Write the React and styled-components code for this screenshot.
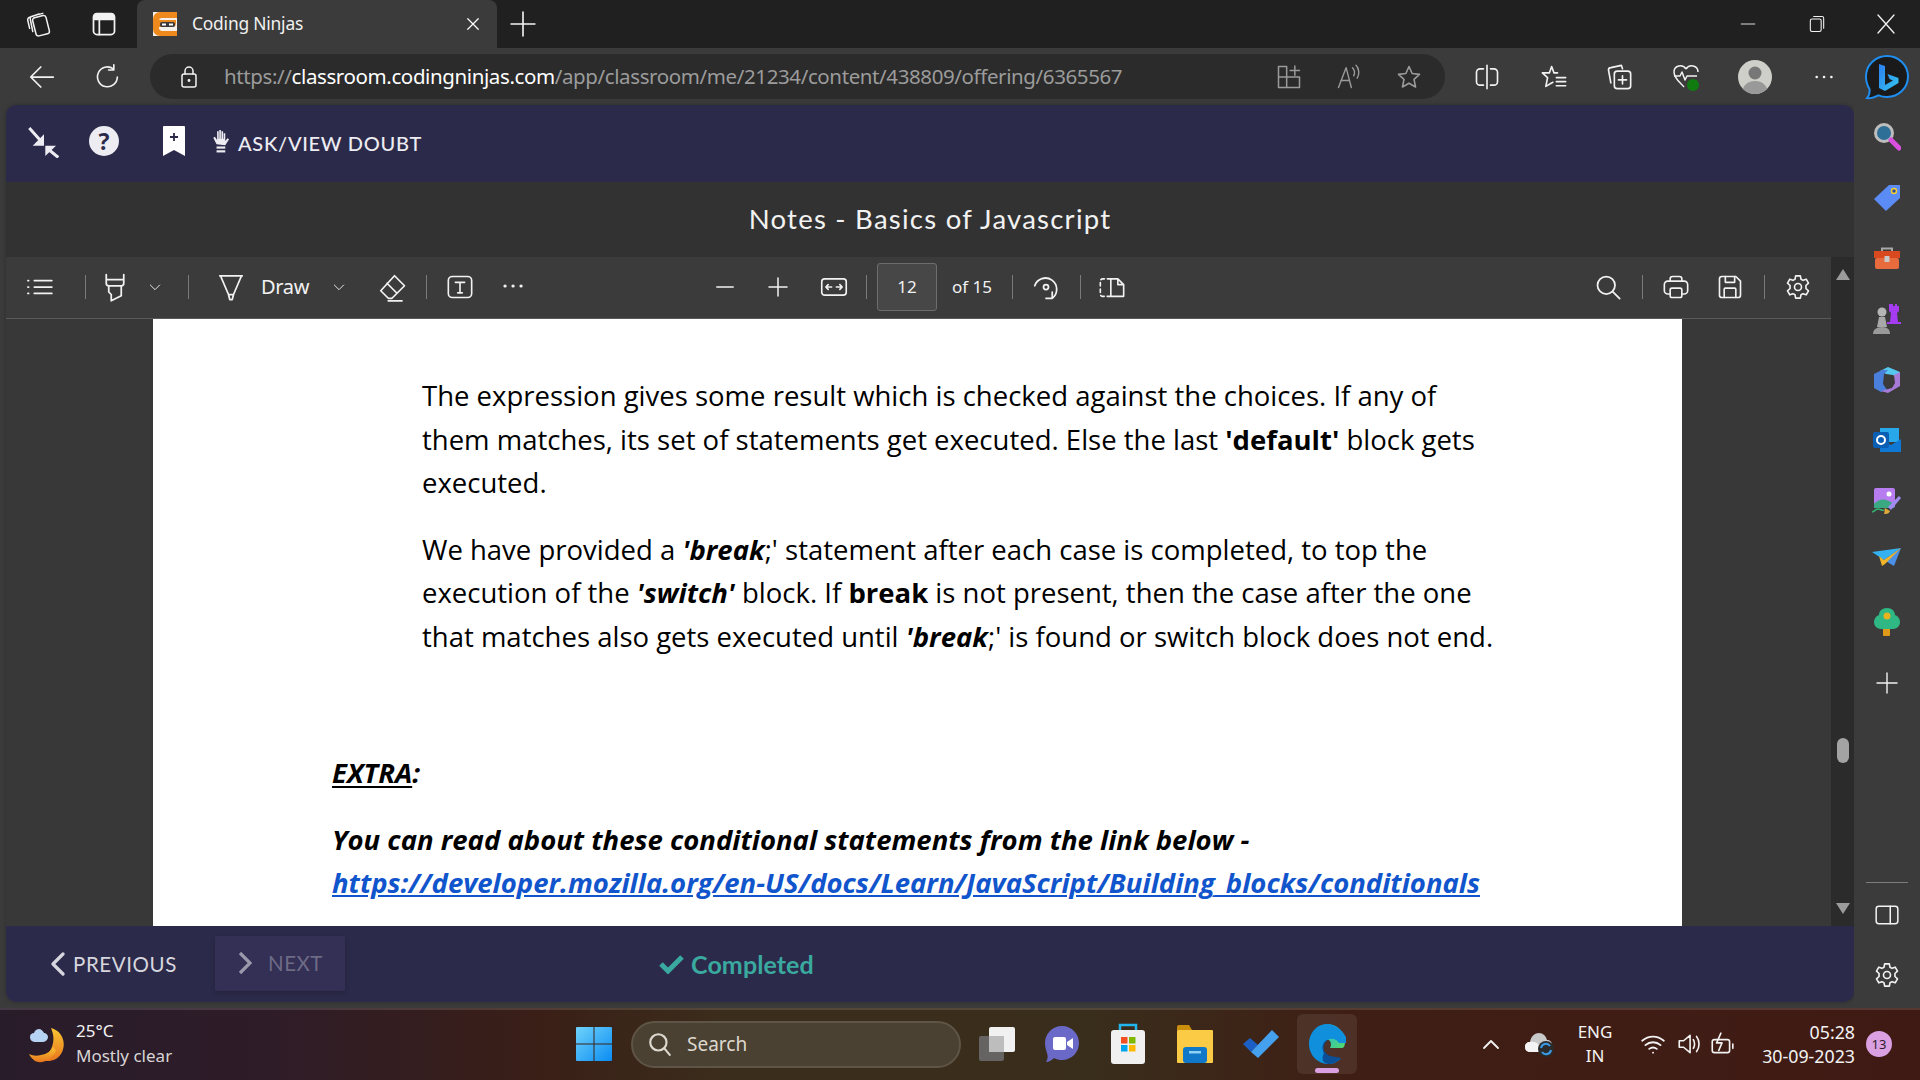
import React from 'react';
import styled, { createGlobalStyle } from 'styled-components';

const GlobalStyle = createGlobalStyle`
  html, body { margin: 0; padding: 0; background: #3b3b3b; }
  body { font-family: "Open Sans", "Liberation Sans", sans-serif; overflow: hidden; }
`;

const COLORS = {
  strip: '#202020',
  chrome: '#3b3b3b',
  purple: '#2c2a4a',
  title: '#323232',
  pdfBg: '#383838',
  track: '#2b2b2b',
  teal: '#3aa99f',
};

const UI = '"Noto Sans", "Open Sans", sans-serif';
const MULI = 'Lato, "Open Sans", sans-serif';

const Screen = styled.div`
  width: 1920px;
  height: 1080px;
  display: flex;
  flex-direction: column;
  overflow: hidden;
`;

/* title strip */
const TabStrip = styled.div`
  height: 48px;
  background: ${COLORS.strip};
  display: flex;
  align-items: stretch;
  flex: none;
  color: #fff;
`;

const Slot = styled.div`
  width: ${p => p.$w || 66}px;
  margin-left: ${p => p.$ml || 0}px;
  display: flex;
  align-items: center;
  justify-content: center;
  flex: none;
  color: ${p => p.$dim ? '#9a9a9a' : '#f2f2f2'};
`;

const Tab = styled.div`
  width: 360px;
  margin-left: 2px;
  background: ${COLORS.chrome};
  border-radius: 8px 8px 0 0;
  display: flex;
  align-items: center;
  padding-left: 16px;
  box-sizing: border-box;
  flex: none;
`;

const TabTitle = styled.span`
  font: 400 17.4px ${UI};
  color: #f0f0f0;
  margin: -2px 0 0 15px;
  width: 272px;
  letter-spacing: -0.2px;
`;

const WindowControls = styled.div`
  margin-left: auto;
  display: flex;
  align-items: stretch;
  padding-right: 0;
`;

/* browser toolbar */
const Toolbar = styled.div`
  height: 57px;
  background: ${COLORS.chrome};
  display: flex;
  align-items: center;
  padding-left: 9px;
  flex: none;
`;

const AddressBar = styled.div`
  width: 1295px;
  height: 45px;
  margin-left: 9px;
  border-radius: 23px;
  background: #2b2b2b;
  display: flex;
  align-items: center;
  flex: none;
`;

const Url = styled.div`
  font: 400 20.5px ${UI};
  color: #9b9b9b;
  margin: -2px 0 0 11px;
  width: 1035px;
  white-space: nowrap;
  letter-spacing: -0.39px;
  strong { color: #fff; font-weight: 400; }
`;

const Avatar = styled.div`
  width: 34px;
  height: 34px;
  border-radius: 50%;
  background: #cfcfca;
  overflow: hidden;
  display: flex;
`;

/* main */
const Main = styled.div`
  flex: 1;
  display: flex;
  min-height: 0;
`;

const AppFrame = styled.div`
  width: 1848px;
  margin: 0 0 6px 6px;
  border-radius: 10px;
  overflow: hidden;
  display: flex;
  flex-direction: column;
  flex: none;
  box-shadow: 0 0 4px rgba(0,0,0,0.25);
`;

const AppHeader = styled.div`
  height: 77px;
  flex: none;
  box-sizing: border-box;
  padding-bottom: 6px;
  background: ${COLORS.purple};
  display: flex;
  align-items: center;
`;

const HelpBadge = styled.div`
  width: 30px;
  height: 30px;
  border-radius: 50%;
  background: #ececf2;
  color: ${COLORS.purple};
  font: 700 23px/30px "Open Sans", sans-serif;
  text-align: center;
`;

const AskDoubt = styled.span`
  font: 500 20px ${MULI};
  color: #ececf2;
  letter-spacing: 0.7px;
  margin: 5px 0 0 6px;
`;

const DocTitle = styled.div`
  height: 75px;
  flex: none;
  background: ${COLORS.title};
  color: #f2f2f2;
  font: 400 27.5px ${MULI};
  letter-spacing: 1.25px;
  display: flex;
  align-items: center;
  justify-content: center;
  padding-bottom: 2px;
  box-sizing: border-box;
`;

const ViewerRow = styled.div`
  flex: 1;
  display: flex;
  min-height: 0;
`;

const Viewer = styled.div`
  flex: 1;
  display: flex;
  flex-direction: column;
  min-width: 0;
`;

const PdfTools = styled.div`
  height: 62px;
  flex: none;
  background: ${COLORS.chrome};
  border-bottom: 1px solid #5a5a5a;
  box-sizing: border-box;
  padding-bottom: 2px;
  display: flex;
  align-items: center;
  color: #f2f2f2;
`;

const Sep = styled.div`
  width: 1px;
  height: 24px;
  background: #7a7a7a;
  flex: none;
  margin-left: ${p => p.$ml || 0}px;
`;

const DrawLabel = styled.span`
  font: 400 20px ${UI};
  margin-left: 8px;
  width: 49px;
  letter-spacing: -0.3px;
  flex: none;
`;

const PageInput = styled.div`
  width: 60px;
  height: 48px;
  margin-left: 10px;
  box-sizing: border-box;
  border: 1px solid #6d6d6d;
  border-radius: 3px;
  background: #474747;
  font: 400 17px ${UI};
  display: flex;
  align-items: center;
  justify-content: center;
  flex: none;
`;

const PageCount = styled.span`
  font: 400 17px ${UI};
  margin-left: 15px;
  width: 41px;
  white-space: nowrap;
  flex: none;
`;

const RightTools = styled.div`
  margin-left: auto;
  display: flex;
  align-items: center;
  padding-right: 13px;
`;

const PdfArea = styled.div`
  flex: 1;
  background: ${COLORS.pdfBg};
  padding-left: 147px;
  min-height: 0;
`;

const Page = styled.div`
  width: 1529px;
  height: 100%;
  background: #fff;
  color: #000;
  box-sizing: border-box;
  padding: 55px 0 0 179px;
  overflow: hidden;
  font: 400 27.5px/43.5px "Open Sans", sans-serif;
  white-space: nowrap;
`;

const Para = styled.p`
  margin: 0 0 23px 90px;
`;

const Extra = styled.p`
  margin: 93px 0 23px;
  font-weight: 700;
  font-style: italic;
  u { text-underline-offset: 3px; }
`;

const ExtraLink = styled.p`
  margin: 0;
  font-weight: 700;
  font-style: italic;
  line-height: 43px;
  a { color: #1155cc; }
`;

const Scrollbar = styled.div`
  width: 23px;
  flex: none;
  background: ${COLORS.track};
  position: relative;
`;

const Arrow = styled.div`
  position: absolute;
  left: 5px;
  width: 0;
  height: 0;
  border-left: 7px solid transparent;
  border-right: 7px solid transparent;
  ${p => p.$up
    ? 'top: 12px; border-bottom: 11px solid #9b9b9b;'
    : 'bottom: 12px; border-top: 11px solid #9b9b9b;'}
`;

const Thumb = styled.div`
  position: absolute;
  left: 6px;
  top: 481px;
  width: 12px;
  height: 25px;
  border-radius: 6px;
  background: #a3a3a3;
`;

const BottomNav = styled.div`
  height: 76px;
  flex: none;
  background: ${COLORS.purple};
  display: flex;
  align-items: center;
  font-family: ${MULI};
`;

const PrevBtn = styled.div`
  display: flex;
  align-items: center;
  margin-left: 44px;
  color: #d6d6de;
  font-size: 20.5px;
  letter-spacing: 0.6px;
  width: 165px;
  gap: 7px;
  flex: none;
`;

const NextBtn = styled.div`
  width: 130px;
  height: 55px;
  background: #332f55;
  box-shadow: 0 2px 5px rgba(0,0,0,0.2);
  display: flex;
  align-items: center;
  padding-left: 22px;
  box-sizing: border-box;
  gap: 14px;
  color: #6e6b85;
  font-size: 20.5px;
  letter-spacing: 0.5px;
  margin-bottom: 2px;
  flex: none;
`;

const Completed = styled.div`
  margin-left: 314px;
  display: flex;
  align-items: center;
  gap: 7px;
  color: ${COLORS.teal};
  font-size: 25px;
  font-weight: 700;
  letter-spacing: 0.1px;
`;

/* edge sidebar */
const Sidebar = styled.div`
  flex: 1;
  display: flex;
  flex-direction: column;
  align-items: center;
  padding: 2px 0 3px;
  background: ${COLORS.chrome};
`;

const SideSlot = styled.div`
  height: ${p => p.$h || 60.6}px;
  display: flex;
  align-items: center;
  justify-content: center;
  flex: none;
  color: #f2f2f2;
`;

const SideBottom = styled.div`
  margin-top: auto;
  display: flex;
  flex-direction: column;
  align-items: center;
`;

const SideRule = styled.div`
  width: 42px;
  height: 1px;
  background: #7d7d7d;
  margin-bottom: 2px;
`;

/* taskbar */
const Taskbar = styled.div`
  height: 72px;
  flex: none;
  box-sizing: border-box;
  border-top: 2px solid rgba(255,255,255,0.13);
  padding-bottom: 2px;
  background: linear-gradient(90deg, #291c2a 0%, #2e1c28 14%, #3a1f17 28%, #3b2d1c 38%, #392d1c 57%, #3f1f15 70%, #3f1a14 100%);
  display: flex;
  align-items: center;
  color: #f2f2f2;
`;

const Weather = styled.div`
  display: flex;
  align-items: center;
  margin-left: 29px;
  width: 547px;
  flex: none;
  gap: 11px;
`;

const WeatherText = styled.div`
  font: 400 17px/24.5px ${UI};
  margin-top: -1px;
  span { display: block; color: #d8d4d4; }
`;

const SearchBox = styled.div`
  width: 330px;
  height: 47px;
  margin-left: 19px;
  box-sizing: border-box;
  border: 2px solid #5f5546;
  border-radius: 24px;
  background: #4b4132;
  display: flex;
  align-items: center;
  padding-left: 14px;
  gap: 14px;
  font: 400 19px ${UI};
  color: #ddd8cf;
  flex: none;
`;

const TaskSlot = styled.div`
  width: ${p => p.$w || 60}px;
  height: 60px;
  margin-left: ${p => p.$ml || 0}px;
  display: flex;
  align-items: center;
  justify-content: center;
  flex: none;
  position: relative;
  border-radius: 6px;
  ${p => p.$active && 'background: rgba(255,255,255,0.08);'}
`;

const ActiveMark = styled.div`
  position: absolute;
  bottom: 1px;
  left: 18px;
  width: 24px;
  height: 5px;
  border-radius: 3px;
  background: #dba0e2;
`;

const LangBox = styled.div`
  width: 50px;
  margin-left: 10px;
  font: 400 17px/24px ${UI};
  text-align: center;
  flex: none;
`;

const Clock = styled.div`
  width: 110px;
  margin-left: 8px;
  font: 400 17.8px/24.5px ${UI};
  text-align: right;
  flex: none;
`;

const Badge = styled.div`
  width: 26px;
  height: 26px;
  margin-left: 11px;
  border-radius: 50%;
  background: #dba0e2;
  color: #2a1c2a;
  font: 400 13px ${UI};
  display: flex;
  align-items: center;
  justify-content: center;
  flex: none;
`;

/* icons */
const Ic = ({ s = 24, w, h, sw = 1.5, vb = '0 0 24 24', children }) => (
  <svg width={w || s} height={h || s} viewBox={vb} fill="none" stroke="currentColor" strokeWidth={sw} strokeLinecap="round" strokeLinejoin="round">
    {children}
  </svg>
);

const Gear = ({ s = 28 }) => (
  <Ic s={s} sw={1.4}>
    <circle cx="12" cy="12" r="3" />
    <path d="M10 2.500h4l.6 2.900 1.700.9 2.700-1 2 3.400-2.200 2v2.600l2.200 2-2 3.400-2.700-1-1.700.9-.6 2.900h-4l-.6-2.900-1.700-.9-2.700 1-2-3.400 2.200-2v-2.600l-2.200-2 2-3.400 2.700 1 1.700-.9z" />
  </Ic>
);

const Favicon = () => (
  <svg width="24" height="24" viewBox="0 0 24 24">
    <rect width="24" height="24" fill="#f5f1ea" />
    <path d="M7 0h17v6H9a3 3 0 0 0-3 3v7c0 1.600 1.400 3 3 3h15v5H7a7 7 0 0 1-7-7V7a7 7 0 0 1 7-7z" fill="#ee8a1d" />
    <path d="M6 8h17v3a4 4 0 0 1-4 4H6z" fill="#ee8a1d" />
    <rect x="7" y="10" width="15" height="5" rx="2" fill="#3a3a3a" />
    <rect x="9" y="11.500" width="4" height="2" fill="#fff" />
    <rect x="16" y="11.500" width="4" height="2" fill="#fff" />
  </svg>
);

const BingLogo = () => (
  <svg width="46" height="46" viewBox="0 0 46 46">
    <defs>
      <linearGradient id="bingB" x1="0" y1="0" x2="1" y2="1">
        <stop offset="0" stopColor="#2b7ff0" />
        <stop offset="1" stopColor="#35c6ee" />
      </linearGradient>
    </defs>
    <path d="M23 2c11.600 0 21 9 21 20.500S34.600 43 23 43c-3 0-6-.6-8.500-1.700C11 43 6 44.500 3 44c2-2.500 3-6 2.500-9C3.300 31.500 2 27 2 22.500 2 11 11.400 2 23 2z" fill="#1a1a1a" stroke="#1e8ef0" strokeWidth="2" />
    <path d="M15 10l6 2v19l8-4.500-3.500-1.500-2-5 11 4v5L21 37l-6-3z" fill="url(#bingB)" />
  </svg>
);

const SearchGlass = () => (
  <svg width="28" height="30" viewBox="0 0 28 30">
    <circle cx="11" cy="11" r="8.500" fill="#2d6f96" stroke="#bdbdbd" strokeWidth="3" />
    <path d="M18 18l8 8" stroke="#d94fe0" strokeWidth="5" strokeLinecap="round" />
  </svg>
);

const TagIcon = () => (
  <svg width="28" height="28" viewBox="0 0 28 28">
    <path d="M16 1h11v13L13 27 1 15z" fill="#5b8bf5" strokeLinejoin="round" />
    <circle cx="21" cy="7" r="2.500" fill="#2c4fa0" stroke="#f5cf2e" strokeWidth="1.500" />
  </svg>
);

const Toolbox = () => (
  <svg width="28" height="24" viewBox="0 0 28 24">
    <path d="M9 6V2.500h10V6" fill="none" stroke="#a8a8a8" strokeWidth="2" />
    <rect x="1" y="5" width="26" height="7" fill="#d8491f" />
    <rect x="2" y="12" width="24" height="11" rx="2" fill="#e86b3e" />
    <rect x="11.500" y="10" width="5" height="6" fill="#c9c9c9" />
  </svg>
);

const Chess = () => (
  <svg width="30" height="32" viewBox="0 0 30 32">
    <path d="M21 1h2v2h2V1h2v2h2v5l-2 2 1 9h3v2H17v-2h3l1-9-2-2V1h2z" fill="#a53cf2" transform="translate(-2 0)" />
    <circle cx="10" cy="9" r="4.500" fill="#b5b5b5" />
    <path d="M7 14h6l2 10H5z" fill="#a8a8a8" />
    <path d="M1 31c0-4 3-7 9-7s8 3 8 7z" fill="#999" />
  </svg>
);

const OfficeLogo = () => (
  <svg width="27" height="26" viewBox="0 0 27 26">
    <path d="M6 4l8-4 12 5v8l-7-5-7-1z" fill="#56c8ee" />
    <path d="M0 7l8-4 6 0-4 4-1 10 4 6-6 2-7-4z" fill="#4a7fdc" />
    <path d="M26 5v14l-12 7-7-2 11-3 3-5-1-8z" fill="#a77ad8" />
  </svg>
);

const Outlook = () => (
  <svg width="28" height="26" viewBox="0 0 28 26">
    <rect x="7" y="1" width="19" height="14" fill="#28a8ea" />
    <path d="M7 12l11 6 10-6v13H7z" fill="#0f78d4" />
    <rect x="0" y="5" width="16" height="16" rx="2" fill="#0a5fb4" />
    <circle cx="8" cy="13" r="4" fill="none" stroke="#fff" strokeWidth="2" />
  </svg>
);

const Designer = () => (
  <svg width="30" height="28" viewBox="0 0 30 28">
    <rect x="2" y="1" width="21" height="20" rx="2" fill="#b77df0" />
    <circle cx="17" cy="7" r="2.500" fill="#fff" />
    <path d="M2 17c5-6 12-6 20 0v4H2z" fill="#3aa882" />
    <path d="M0 25c4-1 3-3 6-3s3 2 6 1" stroke="#35b36f" strokeWidth="1.500" fill="none" />
    <path d="M16 20l11-11 2 2-10 12z" fill="#a28bf2" />
    <path d="M13 21l5 3c-1 3-4 3-6 3 1-2 0-4 1-6z" fill="#e0a83a" />
  </svg>
);

const PaperPlane = () => (
  <svg width="30" height="26" viewBox="0 0 30 26">
    <path d="M0 4L29 0 12 12z" fill="#35b1ef" />
    <path d="M29 0L22 18 12 12z" fill="#4b8fe6" />
    <path d="M7 8l5 4 17-12-16 16-3 2z" fill="#f0b429" />
  </svg>
);

const TreeIcon = () => (
  <svg width="26" height="28" viewBox="0 0 26 28">
    <rect x="9" y="19" width="7" height="9" rx="1" fill="#e09a1a" />
    <path d="M13 0c6 0 8 4 8 7 3 1 5 4 5 7 0 4-3 7-7 7H7c-4 0-7-3-7-7 0-3 2-6 5-7 0-3 2-7 8-7z" fill="#2fb784" />
    <circle cx="13" cy="8" r="3.500" fill="#e8b31f" />
  </svg>
);

const Windows = () => (
  <svg width="36" height="36" viewBox="0 0 36 36">
    <defs>
      <linearGradient id="win" x1="0" y1="0" x2="1" y2="1">
        <stop offset="0" stopColor="#6fd3fb" />
        <stop offset="1" stopColor="#0b8cf2" />
      </linearGradient>
    </defs>
    <path d="M1 1h16.500v16.500H0V2a1 1 0 0 1 1-1zM18.500 1H35a1 1 0 0 1 1 1v15.500H18.500zM0 18.500h17.500V35H1a1 1 0 0 1-1-1zM18.500 18.500H36V34a1 1 0 0 1-1 1H18.500z" fill="url(#win)" />
  </svg>
);

const WeatherIcon = () => (
  <svg width="36" height="38" viewBox="0 0 36 38">
    <defs>
      <linearGradient id="moon" x1="0" y1="0" x2="0" y2="1">
        <stop offset="0" stopColor="#f7c531" />
        <stop offset="1" stopColor="#e8761e" />
      </linearGradient>
    </defs>
    <path d="M22 3c12 3 16 16 10 26-5 8-17 10-26 2 10 2 16-3 18-13 1-6 0-10-2-15z" fill="url(#moon)" />
    <path d="M6 36c-3-2-5-5-6-7 4 2 8 2 12 1 6-1 10-4 12-8l3 4c-3 6-8 10-14 11-3 .5-5 0-7-1z" fill="url(#moon)" />
    <path d="M7 17c-4 0-6-2-6-5s2-4 4-4c1-3 3-4 5-4s4 2 5 4c2 0 4 2 4 4s-2 5-5 5z" fill="#b7d3f4" />
  </svg>
);

const TaskView = () => (
  <svg width="38" height="36" viewBox="0 0 38 36">
    <rect x="11" y="1" width="26" height="25" rx="2" fill="#f1f1f1" />
    <rect x="1" y="10" width="25" height="25" rx="2" fill="#6a6a6a" fillOpacity="0.9" />
    <rect x="11" y="10" width="15" height="16" fill="#bdbdbd" />
  </svg>
);

const MeetIcon = () => (
  <svg width="36" height="38" viewBox="0 0 36 38">
    <path d="M18 1c10 0 17 8 17 17s-7 17-17 17c-3 0-5-.5-8-2-2 2-5 4-8 4 2-3 2-6 1-9-1-3-2-6-2-10C1 9 8 1 18 1z" fill="#6b69c8" />
    <rect x="9" y="12" width="13" height="13" rx="2" fill="#fff" />
    <path d="M23 17l6-4v11l-6-4z" fill="#fff" />
  </svg>
);

const StoreIcon = () => (
  <svg width="36" height="42" viewBox="0 0 36 42">
    <path d="M10 8V2h16v6" fill="none" stroke="#22b6ec" strokeWidth="2.500" />
    <rect x="1" y="7" width="34" height="34" rx="3" fill="#f0f0f0" />
    <rect x="11" y="14" width="6.500" height="6.500" fill="#f25022" />
    <rect x="19" y="14" width="6.500" height="6.500" fill="#7fba00" />
    <rect x="11" y="22" width="6.500" height="6.500" fill="#00a4ef" />
    <rect x="19" y="22" width="6.500" height="6.500" fill="#ffb900" />
  </svg>
);

const FolderIcon = () => (
  <svg width="36" height="38" viewBox="0 0 36 38">
    <path d="M0 2a2 2 0 0 1 2-2h10l3 5h-15z" fill="#c98e0c" />
    <rect x="0" y="5" width="36" height="33" rx="1" fill="#fbcb45" />
    <rect x="6" y="22" width="24" height="16" rx="3" fill="#0f78c9" />
    <rect x="12" y="26" width="12" height="2.500" fill="#8fd0f5" />
  </svg>
);

const TodoIcon = () => (
  <svg width="38" height="30" viewBox="0 0 38 30">
    <path d="M1 15l7-6 8 7-7 7z" fill="#1c5fc4" />
    <path d="M9 23L30 1l7 7-21 21z" fill="#45a0ee" />
  </svg>
);

const EdgeIcon = () => (
  <svg width="38" height="42" viewBox="0 0 38 42">
    <defs>
      <linearGradient id="edgeA" x1="0" y1="0" x2="1" y2="1">
        <stop offset="0" stopColor="#1fb8e0" />
        <stop offset="1" stopColor="#54d96c" />
      </linearGradient>
    </defs>
    <path d="M19 1c11 0 18 9 18 18 0 3-1 6-3 6H22c3-5-1-10-6-9z" fill="url(#edgeA)" />
    <path d="M19 1C8 1 1 11 1 21c0 11 9 20 19 20 5 0 10-2 13-6-6 3-14 1-17-5-3-6 0-13 6-14 4-1 7 1 9 4h9C38 10 29 1 19 1z" fill="#0f8fdc" />
    <path d="M16 30c-3-6-1-12 4-13-6 4-6 13 2 16 4 1 8 1 11 2-3 4-8 6-13 6-5-1-7-5-4-11z" fill="#0b4f97" />
  </svg>
);

const OneDrive = () => (
  <svg width="30" height="28" viewBox="0 0 30 28">
    <path d="M6 22c-4 0-6-2-6-5s2-5 5-5c1-6 5-9 9-9 4 0 7 3 8 7 3 0 5 2 5 5" fill="#c9c9c9" />
    <path d="M0 17c0-3 2-5 5-5 3-1 7 0 9 3v7H6c-4 0-6-2-6-5z" fill="#f4f4f4" />
    <circle cx="21" cy="19" r="8" fill="#2b2b2b" />
    <path d="M16 18a5 5 0 0 1 9-2M26 20a5 5 0 0 1-9 2" stroke="#3a9be8" strokeWidth="2" fill="none" />
  </svg>
);

function App() {
  return (
    <Screen>
      <GlobalStyle />
      <TabStrip>
        <Slot $w={68} $ml={5}>
          <Ic s={30} sw={1.2}>
            <rect x="8" y="6" width="11" height="15" rx="2" transform="rotate(-14 13 13)" />
            <path d="M7 18L5 8a2 2 0 0 1 1.500-2.300L15 3.500M4.500 15.500L3 9a2 2 0 0 1 1.500-2.400L12 4" />
          </Ic>
        </Slot>
        <Slot $w={62}>
          <Ic s={28} sw={1.5}><rect x="3" y="3" width="18" height="18" rx="3" /><path d="M8 8v13" /><path d="M4 4h16v4H4z" fill="currentColor" /></Ic>
        </Slot>
        <Tab>
          <Favicon />
          <TabTitle>Coding Ninjas</TabTitle>
          <Ic s={18} sw={1.6}><path d="M5 5l14 14M19 5L5 19" /></Ic>
        </Tab>
        <Slot $w={52}>
          <Ic s={26} sw={1.5}><path d="M12 1v22M1 12h22" /></Ic>
        </Slot>
        <WindowControls>
          <Slot $w={69}><Ic s={18} sw={1.2}><path d="M3 12h18" /></Ic></Slot>
          <Slot $w={69}><Ic s={20} sw={1.3}><rect x="4" y="6" width="13" height="15" rx="2" /><path d="M8 3h10a2 2 0 0 1 2 2v12" /></Ic></Slot>
          <Slot $w={69}><Ic s={24} sw={1.3}><path d="M4 3l16 18M20 3L4 21" /></Ic></Slot>
        </WindowControls>
      </TabStrip>

      <Toolbar>
        <Slot><Ic s={30} sw={1.4}><path d="M21 12H3.500M11 4l-8 8 8 8" /></Ic></Slot>
        <Slot><Ic s={28} sw={1.4}><path d="M20 12a8.500 8.500 0 1 1-3.500-7M17 1.500V6h-4.500" /></Ic></Slot>
        <AddressBar>
          <Slot $w={48} $ml={15}>
            <Ic s={24} sw={1.5}><rect x="5" y="9" width="14" height="13" rx="2" /><path d="M8 9V6a4 4 0 0 1 8 0v3" /><circle cx="12" cy="15.500" r="0.700" fill="currentColor" /></Ic>
          </Slot>
          <Url>https://<strong>classroom.codingninjas.com</strong>/app/classroom/me/21234/content/438809/offering/6365567</Url>
          <Slot $w={60} $dim><Ic s={28} sw={1.3}><path d="M3 3h7v18H3zM3 12h18v9H10M13 6.500h8M17 2.500v8" /></Ic></Slot>
          <Slot $w={60} $dim><Ic s={28} sw={1.2}><path d="M3 21L9.500 4 14 21M5 15h7.500M15 4c2 2 2 5 1 7M18 2c3 3 3 8 1 11" /></Ic></Slot>
          <Slot $w={60} $dim><Ic s={28} sw={1.4}><path d="M12 3l2.700 6 6.300.7-4.700 4.300 1.300 6.500L12 17.300 6.400 20.500l1.300-6.500L3 9.700 9.300 9z" /></Ic></Slot>
        </AddressBar>
        <Slot $w={68} $ml={8}>
          <Ic s={28} sw={1.4}><path d="M9 5H6a3 3 0 0 0-3 3v8a3 3 0 0 0 3 3h3M15 5h3a3 3 0 0 1 3 3v8a3 3 0 0 1-3 3h-3M12 2v20" /></Ic>
        </Slot>
        <Slot $w={65}>
          <Ic s={28} sw={1.4}><path d="M15 8.500h-3L10 3 8 8.500H2l4.500 4L5 20l6-3.500M14 12.500h8M14 16h8M14 19.500h8" /></Ic>
        </Slot>
        <Slot $w={66}>
          <Ic s={28} sw={1.4}><rect x="8" y="7" width="14" height="15" rx="2.500" /><path d="M15 11v7M11.500 14.500h7M5 17L3 6a2 2 0 0 1 2-2l9-2 1 3" /></Ic>
        </Slot>
        <Slot $w={67}>
          <svg width="30" height="30" viewBox="0 0 30 30" fill="none" stroke="#f2f2f2" strokeWidth="1.500" strokeLinejoin="round">
            <path d="M15 7c-3-5-12-4-12 3 0 7 8 12 10 15" />
            <path d="M15 7c3-5 12-4 12 3" />
            <path d="M3 14h6l2-4 3 8 2-4h10" />
            <circle cx="22" cy="23" r="6" fill="#107c10" stroke="none" />
          </svg>
        </Slot>
        <Slot $w={71}>
          <Avatar>
            <svg width="34" height="34" viewBox="0 0 34 34">
              <circle cx="17" cy="13" r="6.500" fill="#777" />
              <path d="M4 34c0-9 6-13 13-13s13 4 13 13z" fill="#999" />
            </svg>
          </Avatar>
        </Slot>
        <Slot $w={68}>
          <Ic s={22} sw={2.800}><path d="M4 12h.1M12 12h.1M20 12h.1" /></Ic>
        </Slot>
        <Slot $w={58}><BingLogo /></Slot>
      </Toolbar>

      <Main>
        <AppFrame>
          <AppHeader>
            <Slot $w={56} $ml={10}>
              <svg width="34" height="34" viewBox="0 0 34 34" fill="#ececf2" stroke="#ececf2" strokeWidth="3">
                <path d="M2.300 4L13 16M21 25l10.300 8.500" fill="none" />
                <path d="M17 10.300v11.400H5.700z" strokeWidth="0" />
                <path d="M18.300 21.700V32L29 21.700z" strokeWidth="0" />
              </svg>
            </Slot>
            <Slot $w={64}><HelpBadge>?</HelpBadge></Slot>
            <Slot $w={76}>
              <svg width="22" height="30" viewBox="0 0 22 30">
                <path d="M1 0h20a1 1 0 0 1 1 1v29l-11-6-11 6V1a1 1 0 0 1 1-1z" fill="#fff" />
                <path d="M11 7v8M7 11h8" stroke="#2c2a4a" strokeWidth="1.800" />
              </svg>
            </Slot>
            <svg width="20" height="24" viewBox="0 0 18 22" fill="#ececf2">
              <path d="M4 14L1 8l1.500-1 2 3V2h1.500v7h.5V1h1.500v8h.5V2H10v7h.5V4H12v7l2-2.500 1.500 1L12 15z" />
              <rect x="4" y="16" width="8" height="2" />
              <rect x="4" y="19.500" width="8" height="2" />
            </svg>
            <AskDoubt>ASK/VIEW DOUBT</AskDoubt>
          </AppHeader>

          <DocTitle>Notes - Basics of Javascript</DocTitle>

          <ViewerRow>
            <Viewer>
              <PdfTools>
                <Slot $w={66}>
                  <Ic s={28} sw={1.5}><path d="M8 6.500h15M8 12h15M8 17.500h15M2.500 6.500h.6M2.500 12h.6M2.500 17.500h.6" /></Ic>
                </Slot>
                <Sep $ml={13} />
                <Slot $w={58}>
                  <Ic s={30} sw={1.4}><path d="M5 2v7a2 2 0 0 0 2 2h10a2 2 0 0 0 2-2V2M5 6h14M7 11v5l2 2v5l8-4v-8" /></Ic>
                </Slot>
                <Slot $w={22}><Ic s={16} sw={1.400}><path d="M5 9l7 7 7-7" /></Ic></Slot>
                <Sep $ml={22} />
                <Slot $w={44} $ml={20}>
                  <Ic s={30} sw={1.4}><path d="M3 3h18M4 4l6 14h4l6-14M10 18l1 4h2l1-4" /></Ic>
                </Slot>
                <DrawLabel>Draw</DrawLabel>
                <Slot $w={22} $ml={18}><Ic s={16} sw={1.400}><path d="M5 9l7 7 7-7" /></Ic></Slot>
                <Slot $w={40} $ml={22}>
                  <Ic s={30} sw={1.400}><path d="M14 3l8 8-10 10H9l-6-6zM8 9l8 8M9 23h11" /></Ic>
                </Slot>
                <Sep $ml={14} />
                <Slot $w={40} $ml={13}>
                  <Ic s={28} sw={1.400}><rect x="2" y="3" width="20" height="18" rx="3.500" /><path d="M8 8h8M12 8v9M10 17h4" /></Ic>
                </Slot>
                <Slot $w={40} $ml={13}>
                  <Ic s={24} sw={3.200}><path d="M4 11h.1M12 11h.1M20 11h.1" /></Ic>
                </Slot>
                <Slot $w={40} $ml={172}><Ic s={22} sw={1.500}><path d="M3 12h18" /></Ic></Slot>
                <Slot $w={40} $ml={13}><Ic s={24} sw={1.500}><path d="M12 3v18M3 12h18" /></Ic></Slot>
                <Slot $w={40} $ml={16}>
                  <Ic s={28} sw={1.400}><rect x="1.500" y="5" width="21" height="14" rx="2.500" /><path d="M5 12h5M5 12l2-2M5 12l2 2M19 12h-5M19 12l-2-2M19 12l-2 2" /></Ic>
                </Slot>
                <Sep $ml={12} />
                <PageInput>12</PageInput>
                <PageCount>of 15</PageCount>
                <Sep $ml={19} />
                <Slot $w={40} $ml={13}>
                  <Ic s={30} sw={1.400}><path d="M3 11a9 9 0 1 1 14 10M17 16v5h-5" /><circle cx="12" cy="12" r="2" /></Ic>
                </Slot>
                <Sep $ml={14} />
                <Slot $w={40} $ml={11}>
                  <Ic s={28} sw={1.400}><path d="M11 5H4a2 2 0 0 0-2 2v11a2 2 0 0 0 2 2h7" strokeDasharray="3 2.500" /><path d="M11 20V5h6l5 5v10zM17 5v5h5" /></Ic>
                </Slot>
                <RightTools>
                  <Slot $w={40}><Ic s={28} sw={1.500}><circle cx="10.500" cy="10.500" r="7.500" /><path d="M16 16l6 6" /></Ic></Slot>
                  <Sep $ml={14} />
                  <Slot $w={40} $ml={13}>
                    <Ic s={28} sw={1.400}><path d="M7 7V5a2 2 0 0 1 2-2h6a2 2 0 0 1 2 2v2M7 18H5a3 3 0 0 1-3-3v-5a3 3 0 0 1 3-3h14a3 3 0 0 1 3 3v5a3 3 0 0 1-3 3h-2" /><rect x="7" y="13" width="10" height="8" rx="1.500" /></Ic>
                  </Slot>
                  <Slot $w={40} $ml={14}>
                    <Ic s={28} sw={1.400}><path d="M3 5a2 2 0 0 1 2-2h12l4 4v12a2 2 0 0 1-2 2H5a2 2 0 0 1-2-2z" /><path d="M8 3v5h8V3M7 21v-7a1 1 0 0 1 1-1h8a1 1 0 0 1 1 1v7" /></Ic>
                  </Slot>
                  <Sep $ml={14} />
                  <Slot $w={40} $ml={13}><Gear s={28} /></Slot>
                </RightTools>
              </PdfTools>
              <PdfArea>
                <Page>
                  <Para>
                    The expression gives some result which is checked against the choices. If any of<br />
                    them matches, its set of statements get executed. Else the last <b>'default'</b> block gets<br />
                    executed.
                  </Para>
                  <Para>
                    We have provided a <b><i>'break</i></b>;' statement after each case is completed, to top the<br />
                    execution of the <b><i>'switch'</i></b> block. If <b>break</b> is not present, then the case after the one<br />
                    that matches also gets executed until <b><i>'break</i></b>;' is found or switch block does not end.
                  </Para>
                  <Extra><u>EXTRA</u>:</Extra>
                  <ExtraLink>
                    You can read about these conditional statements from the link below -<br />
                    <a href="#mdn">https://developer.mozilla.org/en-US/docs/Learn/JavaScript/Building_blocks/conditionals</a>
                  </ExtraLink>
                </Page>
              </PdfArea>
            </Viewer>
            <Scrollbar>
              <Arrow $up />
              <Thumb />
              <Arrow />
            </Scrollbar>
          </ViewerRow>

          <BottomNav>
            <PrevBtn>
              <Ic w={16} h={24} sw={3.200} vb="0 0 16 24"><path d="M13 2L3 12l10 10" /></Ic>
              PREVIOUS
            </PrevBtn>
            <NextBtn>
              <svg width="17" height="24" viewBox="0 0 17 24" fill="none" stroke="#9a98aa" strokeWidth="3.200">
                <path d="M3 2l10 10L3 22" />
              </svg>
              NEXT
            </NextBtn>
            <Completed>
              <svg width="25" height="20" viewBox="0 0 25 20" fill="none" stroke={COLORS.teal} strokeWidth="5">
                <path d="M2 10l7 7L23 3" />
              </svg>
              Completed
            </Completed>
          </BottomNav>
        </AppFrame>

        <Sidebar>
          <SideSlot><SearchGlass /></SideSlot>
          <SideSlot><TagIcon /></SideSlot>
          <SideSlot><Toolbox /></SideSlot>
          <SideSlot><Chess /></SideSlot>
          <SideSlot><OfficeLogo /></SideSlot>
          <SideSlot><Outlook /></SideSlot>
          <SideSlot><Designer /></SideSlot>
          <SideSlot><PaperPlane /></SideSlot>
          <SideSlot><TreeIcon /></SideSlot>
          <SideSlot><Ic s={24} sw={1.400}><path d="M12 2v20M2 12h20" /></Ic></SideSlot>
          <SideBottom>
            <SideRule />
            <SideSlot $h={60}>
              <Ic s={26} sw={1.400}><rect x="2" y="4" width="20" height="16" rx="2.500" /><path d="M15 4v16" /></Ic>
            </SideSlot>
            <SideSlot $h={60}><Gear s={28} /></SideSlot>
          </SideBottom>
        </Sidebar>
      </Main>

      <Taskbar>
        <Weather>
          <WeatherIcon />
          <WeatherText>25°C<span>Mostly clear</span></WeatherText>
        </Weather>
        <Windows />
        <SearchBox>
          <Ic s={26} sw={2}><circle cx="10.500" cy="10.500" r="7.500" /><path d="M16 16l5 6" /></Ic>
          Search
        </SearchBox>
        <TaskSlot $ml={6}><TaskView /></TaskSlot>
        <TaskSlot $ml={5}><MeetIcon /></TaskSlot>
        <TaskSlot $ml={6}><StoreIcon /></TaskSlot>
        <TaskSlot $ml={7}><FolderIcon /></TaskSlot>
        <TaskSlot $ml={6}><TodoIcon /></TaskSlot>
        <TaskSlot $ml={6} $active><EdgeIcon /><ActiveMark /></TaskSlot>
        <TaskSlot $w={40} $ml={114}><Ic s={24} sw={1.800}><path d="M5 16l7-7 7 7" /></Ic></TaskSlot>
        <TaskSlot $w={40} $ml={9}><OneDrive /></TaskSlot>
        <LangBox>ENG<br />IN</LangBox>
        <TaskSlot $w={36} $ml={15}>
          <Ic s={26} sw={1.700}><path d="M2 9c6-5 14-5 20 0M5 13c4-3.500 10-3.500 14 0M8.500 16.500c2-1.500 5-1.500 7 0M12 20h.1" /></Ic>
        </TaskSlot>
        <TaskSlot $w={36}>
          <Ic s={26} sw={1.500}><path d="M3 9v6h4l6 5V4L7 9zM16 8c1.500 2 1.500 6 0 8M19 5c3 4 3 10 0 14" /></Ic>
        </TaskSlot>
        <TaskSlot $w={30}>
          <Ic s={26} sw={1.500}><rect x="3" y="8" width="16" height="12" rx="2" /><path d="M22 12v4M11 2L7 11h5l-3 7" /></Ic>
        </TaskSlot>
        <Clock>05:28<br />30-09-2023</Clock>
        <Badge>13</Badge>
      </Taskbar>
    </Screen>
  );
}

export default App;
